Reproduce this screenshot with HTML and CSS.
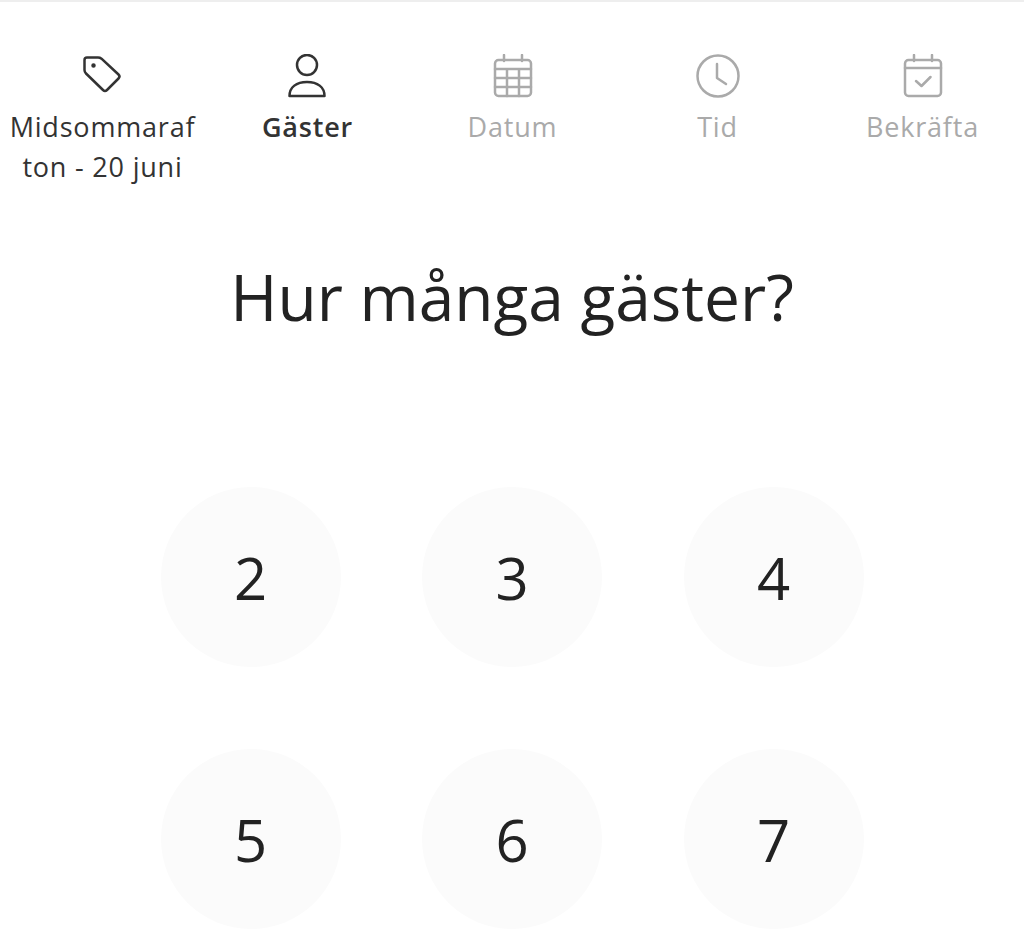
FILE: index.html
```html
<!DOCTYPE html>
<html lang="sv">
  <head>
    <meta charset="UTF-8" />
    <title>Hur många gäster?</title>
    <link rel="stylesheet" href="styles.css">
  </head>
  <body>
    <nav class="steps">
      <div class="step step-done">
        <svg class="step-icon" viewBox="2 0 40 44">
          <path d="M6 3.500H17q2 0 3.500 1.200L37.500 20.500q2 2 0 4L26 36q-2 2-4 0L5 19.500q-1.500-1.500-1.500-3.500V6q0-2.500 2.500-2.500z" />
          <circle class="dot" cx="12.500" cy="11.500" r="1" />
        </svg>
        <span class="step-label">Midsommarafton - 20 juni</span>
      </div>
      <div class="step step-active">
        <svg class="step-icon" viewBox="1 0 40 44">
          <circle cx="20" cy="11" r="10" />
          <path d="M2.500 42c0-9 7-14 17.500-14s17.500 5 17.500 14z" />
        </svg>
        <span class="step-label">Gäster</span>
      </div>
      <div class="step">
        <svg class="step-icon" viewBox="0 0 40 44">
          <path d="M11 1v6M29 1v6" />
          <rect x="2" y="6" width="36" height="36" rx="3.500" />
          <path d="M2 15h36M2 24h36M2 33h36M14 15v27M26 15v27" />
        </svg>
        <span class="step-label">Datum</span>
      </div>
      <div class="step">
        <svg class="step-icon step-icon-wide" viewBox="0 0 44 44">
          <circle cx="22" cy="22" r="20.500" />
          <path d="M21 10v14l9 6" />
        </svg>
        <span class="step-label">Tid</span>
      </div>
      <div class="step">
        <svg class="step-icon" viewBox="0 0 40 44">
          <path d="M11 1v6M29 1v6" />
          <rect x="2" y="6" width="36" height="36" rx="3.500" />
          <path d="M2 14h36M13 27l5.500 5 9-9" />
        </svg>
        <span class="step-label">Bekräfta</span>
      </div>
    </nav>

    <h1 class="title">Hur många gäster?</h1>

    <div class="guests">
      <div class="guest">2</div>
      <div class="guest">3</div>
      <div class="guest">4</div>
      <div class="guest">5</div>
      <div class="guest">6</div>
      <div class="guest">7</div>
    </div>
  </body>
</html>
```

FILE: styles.css
```css
html {
  height: 100%;
  overflow: hidden;
}
body {
  margin: 0;
  border-top: 2px solid #eee;
  background: #fff;
  font-family: "Open Sans", sans-serif;
  color: #222;
}
.steps {
  display: grid;
  grid-template-columns: repeat(5, 205px);
  padding-top: 52px;
}
.step {
  display: flex;
  flex-direction: column;
  align-items: center;
  text-align: center;
  color: #aaa;
}
.step-done {
  color: #333;
}
.step-active {
  color: #333;
  font-weight: 600;
}
.step-icon {
  width: 40px;
  height: 44px;
  fill: none;
  stroke: currentColor;
  stroke-width: 2.500;
  stroke-linejoin: round;
  stroke-linecap: round;
}
.step-icon-wide {
  width: 44px;
}
.step-icon .dot {
  fill: currentColor;
}
.step-label {
  margin-top: 9px;
  width: 190px;
  font-size: 27px;
  line-height: 40px;
  letter-spacing: 0.800px;
  overflow-wrap: anywhere;
}
.title {
  margin: 66px 0 0;
  text-align: center;
  font-size: 64px;
  line-height: 88px;
  font-weight: 400;
}
.guests {
  display: grid;
  grid-template-columns: repeat(3, 180px);
  justify-content: center;
  column-gap: 81.500px;
  row-gap: 82px;
  margin-top: 146px;
}
.guest {
  width: 180px;
  height: 180px;
  border-radius: 50%;
  background: #fbfbfb;
  display: flex;
  align-items: center;
  justify-content: center;
  font-size: 58px;
  color: #222;
}
```
